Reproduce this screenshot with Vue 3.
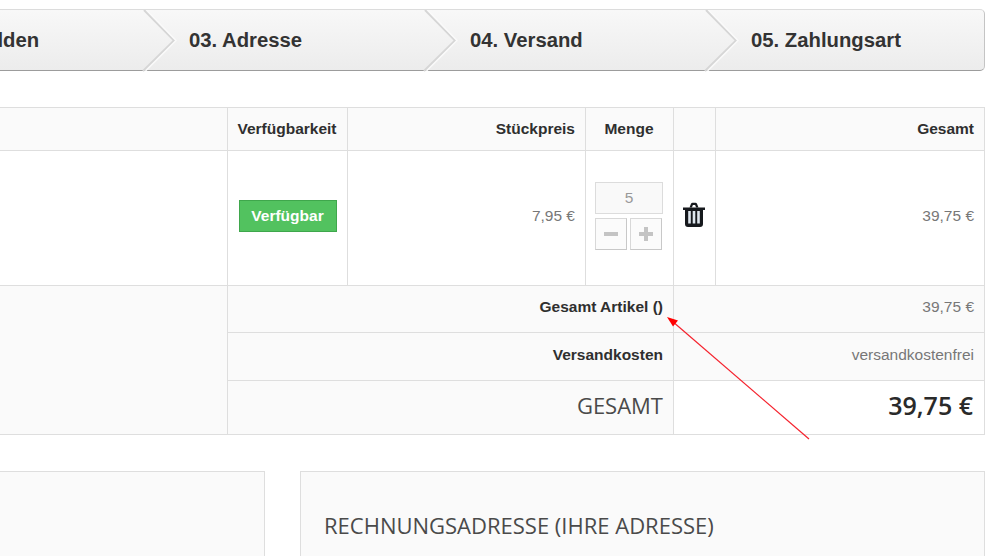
<script setup>
const steps = ['02. Anmelden', '03. Adresse', '04. Versand', '05. Zahlungsart']
</script>

<template>
  <div class="page">
    <nav class="steps">
      <div v-for="(s, i) in steps" :key="s" class="step">
        <svg v-if="i > 0" class="chev" width="36" height="62" viewBox="0 0 36 62">
          <polyline points="3,0 33,30.5 2,61" fill="none" stroke="#d6d6d6" stroke-width="2" />
          <polyline points="5.5,0 35,30.5 4.5,61" fill="none" stroke="#fafafa" stroke-width="1.5" />
        </svg>
        <span class="step-text">{{ s }}</span>
      </div>
    </nav>

    <section class="cart">
      <div class="c head"></div>
      <div class="c head center">Verfügbarkeit</div>
      <div class="c head right">Stückpreis</div>
      <div class="c head center">Menge</div>
      <div class="c head"></div>
      <div class="c head right last">Gesamt</div>

      <div class="c body"></div>
      <div class="c body center"><span class="badge">Verfügbar</span></div>
      <div class="c body right val">7,95 €</div>
      <div class="c body qty">
        <div class="qty-input">5</div>
        <div class="qty-btns">
          <span class="qty-btn">
            <svg width="16" height="16" viewBox="0 0 16 16"><rect x="1" y="6" width="14" height="4" fill="#c4c4c4" /></svg>
          </span>
          <span class="qty-btn">
            <svg width="16" height="16" viewBox="0 0 16 16"><path d="M6 1h4v5h5v4h-5v5H6v-5H1V6h5z" fill="#c4c4c4" /></svg>
          </span>
        </div>
      </div>
      <div class="c body center trash-cell">
        <svg class="trash" width="24" height="25" viewBox="0 0 24 25">
          <path d="M1 5.500h22v2.600h-2V22a3 3 0 0 1-3 3H6a3 3 0 0 1-3-3V8.100H1z" fill="#16191d" />
          <path d="M7.500 5.500 9 1.800C9.300 1.100 9.800.8 10.500.8h3c.7 0 1.200.3 1.500 1l1.500 3.700h-2.400l-1-2.500h-2.200l-1 2.500z" fill="#16191d" />
          <rect x="6.200" y="9" width="2.600" height="12.500" fill="#dfe7ee" />
          <rect x="10.700" y="9" width="2.600" height="12.500" fill="#dfe7ee" />
          <rect x="15.200" y="9" width="2.600" height="12.500" fill="#dfe7ee" />
        </svg>
      </div>
      <div class="c body right val last">39,75 €</div>

      <div class="c blank"></div>
      <div class="c label r1">Gesamt Artikel ()</div>
      <div class="c amount r1">39,75 €</div>
      <div class="c label r2">Versandkosten</div>
      <div class="c amount r2">versandkostenfrei</div>
      <div class="c label big r3">GESAMT</div>
      <div class="c amount grand r3">39,75 €</div>
    </section>

    <section class="panels">
      <div class="panel left"></div>
      <div class="panel main">
        <h2>RECHNUNGSADRESSE (IHRE ADRESSE)</h2>
      </div>
    </section>

    <svg class="arrow" width="1000" height="556" viewBox="0 0 1000 556">
      <line x1="809" y1="439" x2="672" y2="321" stroke="#f5222d" stroke-width="1.200" />
      <polygon points="667,317 678,320.500 673,326.500" fill="#f00" />
    </svg>
  </div>
</template>

<style scoped>
.page {
  position: relative;
  width: 1000px;
  height: 556px;
  overflow: hidden;
  background: #fff;
  font-family: "Liberation Sans", Arial, sans-serif;
  color: #333;
}
.steps {
  display: flex;
  width: 1124px;
  height: 62px;
  margin-left: -139px;
  position: relative;
  top: 9px;
  box-sizing: border-box;
  border-top: 1px solid #dcdcdc;
  border-bottom: 1px solid #9c9c9c;
  border-right: 1px solid #c4c4c4;
  border-radius: 0 5px 5px 0;
  background: linear-gradient(#f8f8f8, #ececec);
}
.step {
  position: relative;
  flex: 0 0 281px;
  box-sizing: border-box;
  padding-left: 47px;
  display: flex;
  align-items: center;
}
.step-text {
  font-size: 20.300px;
  font-weight: 700;
  line-height: 1;
  color: #333;
  white-space: nowrap;
}
.chev {
  position: absolute;
  left: -1px;
  top: -0.5px;
}
.cart {
  display: grid;
  grid-template-columns: 228px 120px 238px 88px 42px 269px;
  grid-template-rows: 43px 135px 47px 48px 54px;
  width: 985px;
  margin-top: 36px;
  box-sizing: border-box;
  position: relative;
  top: 9px;
  border-top: 1px solid #dedede;
}
.c {
  box-sizing: border-box;
  border-right: 1px solid #dedede;
  border-bottom: 1px solid #dedede;
  display: flex;
  align-items: center;
  font-size: 15.500px;
}
.head {
  background: #fafafa;
  font-weight: 700;
  color: #2f2f2f;
  padding: 0 10px 1px 9px;
  white-space: nowrap;
}
.body {
  background: #fff;
  padding: 0 10px 4px;
}
.center { justify-content: center; }
.right { justify-content: flex-end; }
.val { color: #777; }
.badge {
  box-sizing: border-box;
  width: 98px;
  height: 32px;
  display: flex;
  align-items: center;
  justify-content: center;
  background: #52c25f;
  border: 1px solid #3fa74c;
  color: #fff;
  font-weight: 700;
}
.qty {
  flex-direction: column;
  align-items: flex-start;
  justify-content: flex-start;
  padding: 31px 0 0 9px;
}
.qty-input {
  box-sizing: border-box;
  width: 68px;
  height: 32px;
  border: 1px solid #dcdcdc;
  background: #f9f9f9;
  color: #999;
  display: flex;
  align-items: center;
  justify-content: center;
}
.qty-btns {
  display: flex;
  gap: 3px;
  margin-top: 4px;
}
.qty-btn {
  box-sizing: border-box;
  width: 32px;
  height: 32px;
  border: 1px solid #d8d8d8;
  border-bottom-color: #c8c8c8;
  border-right-color: #c8c8c8;
  background: #fbfbfb;
  display: flex;
  align-items: center;
  justify-content: center;
}
.trash-cell { padding: 0 1px 7px 0; }
.trash { display: block; }
.blank {
  grid-column: 1;
  grid-row: 3 / span 3;
  background: #fafafa;
}
.label {
  grid-column: 2 / span 3;
  justify-content: flex-end;
  padding: 0 10px 4px 0;
  background: #fafafa;
  font-weight: 700;
  color: #2f2f2f;
}
.amount {
  grid-column: 5 / span 2;
  justify-content: flex-end;
  padding: 0 10px 4px 0;
  background: #fafafa;
  color: #777;
}
.r1 { grid-row: 3; }
.r2 { grid-row: 4; }
.r3 { grid-row: 5; }
.big {
  font-family: "Open Sans", sans-serif;
  font-weight: 400;
  font-size: 22px;
  color: #4a4a4a;
  padding-bottom: 6px;
}
.grand {
  background: #fff;
  font-family: "Open Sans", sans-serif;
  font-weight: 600;
  font-size: 25px;
  color: #2a2a2a;
  padding: 0 11px 6px 0;
}
.panels {
  display: flex;
  width: 985px;
  gap: 35px;
  margin-top: 36px;
  position: relative;
  top: 9px;
}
.panel {
  box-sizing: border-box;
  height: 140px;
  background: #fafafa;
  border: 1px solid #dedede;
}
.panel.left {
  flex: 0 0 265px;
  border-left: 0;
}
.panel.main {
  flex: 1;
  padding: 39px 0 0 23px;
}
h2 {
  margin: 0;
  font-family: "Open Sans", sans-serif;
  font-weight: 400;
  font-size: 22px;
  line-height: 28px;
  color: #4a4a4a;
  white-space: nowrap;
}
.arrow {
  position: absolute;
  left: 0;
  top: 0;
  pointer-events: none;
}
</style>

<style>
html, body { margin: 0; overflow: hidden; background: #fff; }
</style>
